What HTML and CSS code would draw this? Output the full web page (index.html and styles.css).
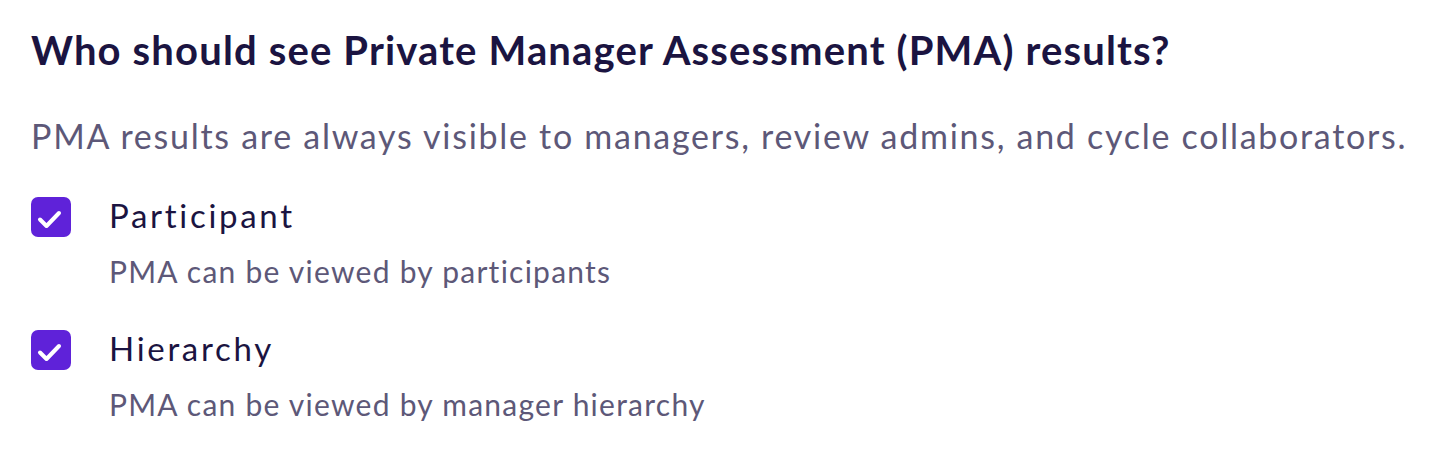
FILE: index.html
```html
<!DOCTYPE html>
<html lang="en">
<head>
  <meta charset="UTF-8">
  <title>PMA visibility</title>
  <link rel="stylesheet" href="styles.css">
</head>
<body>
  <div class="section">
    <h2>Who should see Private Manager Assessment (PMA) results?</h2>
    <p class="hint">PMA results are always visible to managers, review admins, and cycle collaborators.</p>

    <label class="option">
      <span class="box">
        <svg viewBox="0 0 40 40" width="40" height="40"><path d="M9 22.5l6.5 6.5L28 16" fill="none" stroke="#fff" stroke-width="4" stroke-linecap="round" stroke-linejoin="round"/></svg>
      </span>
      <span class="text">
        <span class="label">Participant</span>
        <span class="desc">PMA can be viewed by participants</span>
      </span>
    </label>

    <label class="option">
      <span class="box">
        <svg viewBox="0 0 40 40" width="40" height="40"><path d="M9 22.5l6.5 6.5L28 16" fill="none" stroke="#fff" stroke-width="4" stroke-linecap="round" stroke-linejoin="round"/></svg>
      </span>
      <span class="text">
        <span class="label">Hierarchy</span>
        <span class="desc">PMA can be viewed by manager hierarchy</span>
      </span>
    </label>
  </div>
</body>
</html>
```

FILE: styles.css
```css
body {
  margin: 0;
  font-family: Lato, "Liberation Sans", sans-serif;
  background-color: #fff;
  color: #1b1441;
}
.section {
  padding: 26px 0 26px 31px;
}
h2 {
  margin: 0;
  font-size: 40px;
  line-height: 48px;
  font-weight: 700;
  letter-spacing: 1.15px;
}
.hint {
  margin: 40px 0 0;
  font-size: 34px;
  line-height: 44px;
  letter-spacing: 1.72px;
  white-space: nowrap;
  color: #5d5878;
}
.option {
  display: flex;
  gap: 38px;
  margin-top: 37px;
}
.option + .option {
  margin-top: 37px;
}
.box {
  width: 40px;
  height: 40px;
  margin-top: 2px;
  border-radius: 7px;
  background: #5f22d9;
  flex-shrink: 0;
}
.box svg {
  display: block;
}
.text {
  display: flex;
  flex-direction: column;
}
.label {
  font-size: 33px;
  line-height: 40px;
  letter-spacing: 2.7px;
}
.desc {
  margin-top: 16px;
  font-size: 30px;
  line-height: 40px;
  letter-spacing: 1.25px;
  color: #5d5878;
}
```
